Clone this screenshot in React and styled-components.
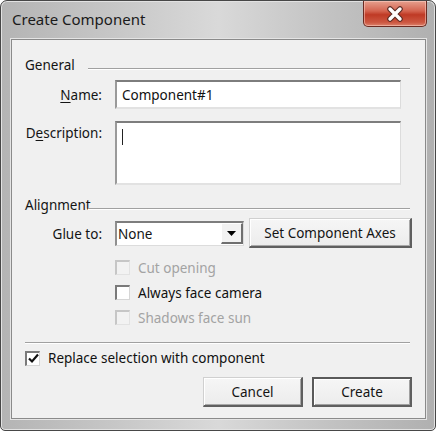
import React from "react";
import styled, { createGlobalStyle } from "styled-components";

const Global = createGlobalStyle`
  html, body { margin: 0; padding: 0; background: #ffffff; }
  body { font-family: "Noto Sans", "Open Sans", sans-serif; }
`;

const Window = styled.div`
  box-sizing: border-box;
  width: 436px;
  height: 431px;
  display: flex;
  flex-direction: column;
  border: 1px solid #474747;
  border-radius: 7px 7px 5px 5px;
  background: linear-gradient(90deg, #b4b4b4 0%, #c6c6c6 25%, #d9d9d9 50%, #c3c3c3 75%, #b0b0b0 100%);
  box-shadow: inset 0 0 0 1px #e2e2e2;
  padding: 0 9px 11px 10px;
`;

const TitleBar = styled.div`
  height: 38px;
  display: flex;
  justify-content: space-between;
  align-items: flex-start;
  flex: none;
`;

const Title = styled.div`
  padding: 8px 0 0 1px;
  font-family: "Noto Sans", sans-serif;
  font-size: 15px;
  color: #1a1a1a;
`;

const CloseButton = styled.div`
  box-sizing: border-box;
  width: 64px;
  height: 26px;
  margin-right: -1px;
  border: 1px solid #6b2b22;
  border-top: none;
  border-radius: 0 0 5px 5px;
  background: linear-gradient(180deg, #e6a08e 0%, #d46450 40%, #bf3a25 55%, #cc5741 85%, #dc826b 100%);
  box-shadow: inset 0 0 0 1px rgba(255, 215, 205, 0.5);
  display: flex;
  align-items: center;
  justify-content: center;
`;

const Client = styled.div`
  flex: 1;
  box-sizing: border-box;
  background: #f0f0f0;
  border: 1px solid #8a8a8a;
  box-shadow: 0 0 0 1px #e4e4e4;
  padding: 17px 13px 11px 13px;
  display: flex;
  flex-direction: column;
  font-family: "Noto Sans", "Open Sans", sans-serif;
  font-size: 13.5px;
  color: #141414;
`;

const GroupHeader = styled.div`
  display: grid;
  grid-template-columns: 63px 1fr;
  height: 16px;
  align-items: center;
  margin: ${(p) => p.$top || 0}px 2px 0 0;
  line-height: 16px;
  white-space: nowrap;
`;

const HeaderLine = styled.div`
  height: 1px;
  margin-top: 8px;
  background: #a0a0a0;
  border-bottom: 1px solid #ffffff;
`;

const FieldRow = styled.div`
  display: grid;
  grid-template-columns: 77px 1fr;
  column-gap: 13px;
  align-items: ${(p) => p.$align || "center"};
  margin-top: ${(p) => p.$top || 0}px;
`;

const Label = styled.label`
  text-align: right;
  white-space: nowrap;
  padding-top: ${(p) => p.$pt || 0}px;
  u { text-decoration: underline; text-underline-offset: 2px; }
`;

const TextBox = styled.div`
  box-sizing: border-box;
  height: ${(p) => p.$h}px;
  margin-right: 11px;
  background: #ffffff;
  border-top: 2px solid #7d7d7d;
  border-left: 2px solid #9a9a9a;
  border-right: 1px solid #dcdcdc;
  border-bottom: 2px solid #e2e2e2;
  padding: ${(p) => (p.$multi ? "4px 5px" : "0 5px")};
  display: flex;
  align-items: ${(p) => (p.$multi ? "flex-start" : "center")};
  color: #111;
`;

const Caret = styled.div`
  width: 1px;
  height: 16px;
  margin-top: 2px;
  background: #222;
`;

const GlueControls = styled.div`
  display: flex;
  align-items: center;
  gap: 5px;
`;

const Select = styled.div`
  box-sizing: border-box;
  width: 129px;
  height: 25px;
  background: #ffffff;
  border-top: 2px solid #7d7d7d;
  border-left: 2px solid #8f8f8f;
  border-right: 1px solid #dcdcdc;
  border-bottom: 1px solid #dcdcdc;
  display: flex;
  align-items: center;
  justify-content: space-between;
  padding-left: 1px;
`;

const DropButton = styled.div`
  box-sizing: border-box;
  width: 22px;
  height: 21px;
  background: #f2f2f2;
  border-top: 1px solid #ffffff;
  border-left: 1px solid #ffffff;
  border-right: 2px solid #6f6f6f;
  border-bottom: 2px solid #6f6f6f;
  display: flex;
  align-items: center;
  justify-content: center;
`;

const Button = styled.div`
  box-sizing: border-box;
  width: ${(p) => p.$w}px;
  height: 30px;
  background: linear-gradient(180deg, #f6f6f6 0%, #ececec 100%);
  border-top: ${(p) => (p.$default ? "2px solid #5a5a5a" : "1px solid #d0d0d0")};
  border-left: ${(p) => (p.$default ? "2px solid #5a5a5a" : "1px solid #d0d0d0")};
  border-right: 2px solid #5f5f5f;
  border-bottom: 2px solid #5f5f5f;
  box-shadow: ${(p) => (p.$default ? "inset 1px 1px 0 #ffffff, inset -1px -1px 0 #a0a0a0" : "inset 1px 1px 0 #ffffff, inset -1px -1px 0 #a8a8a8")};
  display: flex;
  align-items: center;
  justify-content: center;
  color: #141414;
  white-space: nowrap;
`;

const CheckList = styled.div`
  display: flex;
  flex-direction: column;
  margin: 7px 0 0 90px;
`;

const CheckRow = styled.div`
  height: ${(p) => p.$h || 25}px;
  display: flex;
  align-items: center;
  gap: 8px;
  color: ${(p) => (p.$disabled ? "#a3a3a3" : "#111")};
  margin-top: ${(p) => p.$top || 0}px;
  white-space: nowrap;
`;

const Box = styled.div`
  box-sizing: border-box;
  width: 15px;
  height: 15px;
  flex: none;
  border-top: 2px solid ${(p) => (p.$disabled ? "#c6c6c6" : "#7a7a7a")};
  border-left: 2px solid ${(p) => (p.$disabled ? "#c6c6c6" : "#7a7a7a")};
  border-right: 1px solid ${(p) => (p.$disabled ? "#e2e2e2" : "#d6d6d6")};
  border-bottom: 1px solid ${(p) => (p.$disabled ? "#e2e2e2" : "#d6d6d6")};
  background: ${(p) => (p.$disabled ? "#f2f2f2" : "#ffffff")};
  display: flex;
  align-items: center;
  justify-content: center;
`;

const Separator = styled.div`
  height: 1px;
  margin: 12px 2px 0 0;
  background: #a0a0a0;
  border-bottom: 1px solid #ffffff;
`;

const ButtonRow = styled.div`
  display: flex;
  justify-content: flex-end;
  gap: 9px;
  margin-top: 9px;
`;

function CloseGlyph() {
  return (
    <svg width="20" height="16" viewBox="0 0 20 16">
      <path d="M5 3 L15 13 M15 3 L5 13" stroke="#5a2a22" strokeWidth="5.5" strokeLinecap="round" />
      <path d="M5 3 L15 13 M15 3 L5 13" stroke="#ffffff" strokeWidth="3.4" strokeLinecap="round" />
    </svg>
  );
}

function Arrow() {
  return (
    <svg width="9" height="5" viewBox="0 0 9 5">
      <path d="M0 0 H9 L4.5 5 Z" fill="#000" />
    </svg>
  );
}

function Check() {
  return (
    <svg width="11" height="11" viewBox="0 0 11 11">
      <path d="M1 5.5 L4 8.5 L10 1.5" stroke="#111" strokeWidth="2.2" fill="none" />
    </svg>
  );
}

export default function App() {
  return (
    <>
      <Global />
      <Window>
        <TitleBar>
          <Title>Create Component</Title>
          <CloseButton>
            <CloseGlyph />
          </CloseButton>
        </TitleBar>
        <Client>
          <GroupHeader>
            <span>General</span>
            <HeaderLine />
          </GroupHeader>
          <FieldRow $top={7}>
            <Label>
              <u>N</u>ame:
            </Label>
            <TextBox $h={29}>Component#1</TextBox>
          </FieldRow>
          <FieldRow $top={12} $align="start">
            <Label $pt={3}>
              D<u>e</u>scription:
            </Label>
            <TextBox $h={64} $multi>
              <Caret />
            </TextBox>
          </FieldRow>
          <GroupHeader $top={12}>
            <span>Alignment</span>
            <HeaderLine />
          </GroupHeader>
          <FieldRow $top={5}>
            <Label $pt={2}>Glue to:</Label>
            <GlueControls>
              <Select>
                <span>None</span>
                <DropButton>
                  <Arrow />
                </DropButton>
              </Select>
              <Button $w={163}>Set Component Axes</Button>
            </GlueControls>
          </FieldRow>
          <CheckList>
            <CheckRow $disabled>
              <Box $disabled />
              Cut opening
            </CheckRow>
            <CheckRow>
              <Box />
              Always face camera
            </CheckRow>
            <CheckRow $disabled>
              <Box $disabled />
              Shadows face sun
            </CheckRow>
          </CheckList>
          <Separator />
          <CheckRow $h={20} $top={4}>
            <Box>
              <Check />
            </Box>
            Replace selection with component
          </CheckRow>
          <ButtonRow>
            <Button $w={100}>Cancel</Button>
            <Button $w={100} $default>
              Create
            </Button>
          </ButtonRow>
        </Client>
      </Window>
    </>
  );
}
